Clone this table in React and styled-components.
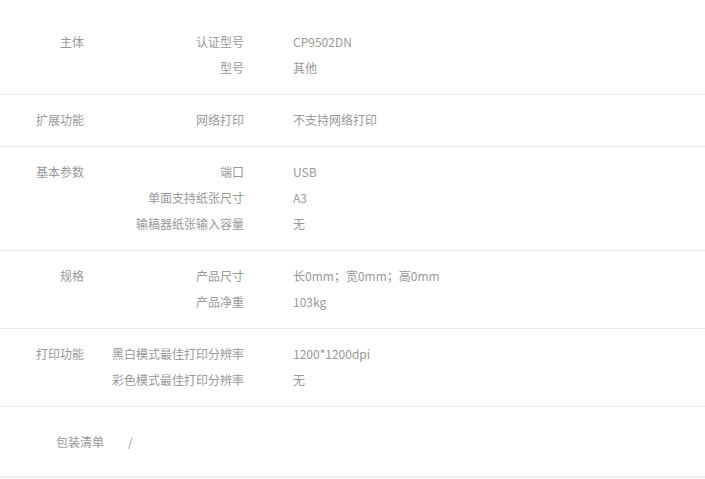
import React from "react";
import styled, { createGlobalStyle } from "styled-components";

const Global = createGlobalStyle`
  html, body { margin: 0; padding: 0; background: #f5f5f5; }
  body { font-family: "Noto Sans CJK SC", "Microsoft YaHei", sans-serif; }
`;

const Page = styled.div`
  background: #fff;
  padding-top: 17px;
  border-bottom: 1px solid #ebebeb;
`;

const Section = styled.section`
  display: grid;
  grid-template-columns: 84px 160px 1fr;
  padding: 12px 0 13px;
  border-top: ${(p) => (p.$first ? "none" : "1px solid #ebebeb")};
  font-size: 12px;
  line-height: 26px;
  color: #999;
`;

const GroupLabel = styled.div`
  grid-column: 1;
  text-align: right;
  white-space: nowrap;
`;

const Params = styled.div`
  grid-column: 2 / span 2;
  display: flex;
  flex-direction: column;
`;

const ParamRow = styled.div`
  display: grid;
  grid-template-columns: 160px 1fr;
  column-gap: 49px;
`;

const Key = styled.div`
  text-align: right;
  white-space: nowrap;
`;

const Value = styled.div`
  white-space: nowrap;
`;

const PackSection = styled.section`
  display: flex;
  gap: 24px;
  padding: 22px 0 21px 56px;
  border-top: 1px solid #ebebeb;
  font-size: 12px;
  line-height: 26px;
  color: #999;
`;

const data = [
  { group: "主体", rows: [["认证型号", "CP9502DN"], ["型号", "其他"]] },
  { group: "扩展功能", rows: [["网络打印", "不支持网络打印"]] },
  {
    group: "基本参数",
    rows: [
      ["端口", "USB"],
      ["单面支持纸张尺寸", "A3"],
      ["输稿器纸张输入容量", "无"],
    ],
  },
  {
    group: "规格",
    rows: [
      ["产品尺寸", "长0mm；宽0mm；高0mm"],
      ["产品净重", "103kg"],
    ],
  },
  {
    group: "打印功能",
    rows: [
      ["黑白模式最佳打印分辨率", "1200*1200dpi"],
      ["彩色模式最佳打印分辨率", "无"],
    ],
  },
];

export default function App() {
  return (
    <>
      <Global />
      <Page>
        {data.map((s, i) => (
          <Section key={s.group} $first={i === 0}>
            <GroupLabel>{s.group}</GroupLabel>
            <Params>
              {s.rows.map(([k, v]) => (
                <ParamRow key={k}>
                  <Key>{k}</Key>
                  <Value>{v}</Value>
                </ParamRow>
              ))}
            </Params>
          </Section>
        ))}
        <PackSection>
          <span>包装清单</span>
          <span>/</span>
        </PackSection>
      </Page>
    </>
  );
}
